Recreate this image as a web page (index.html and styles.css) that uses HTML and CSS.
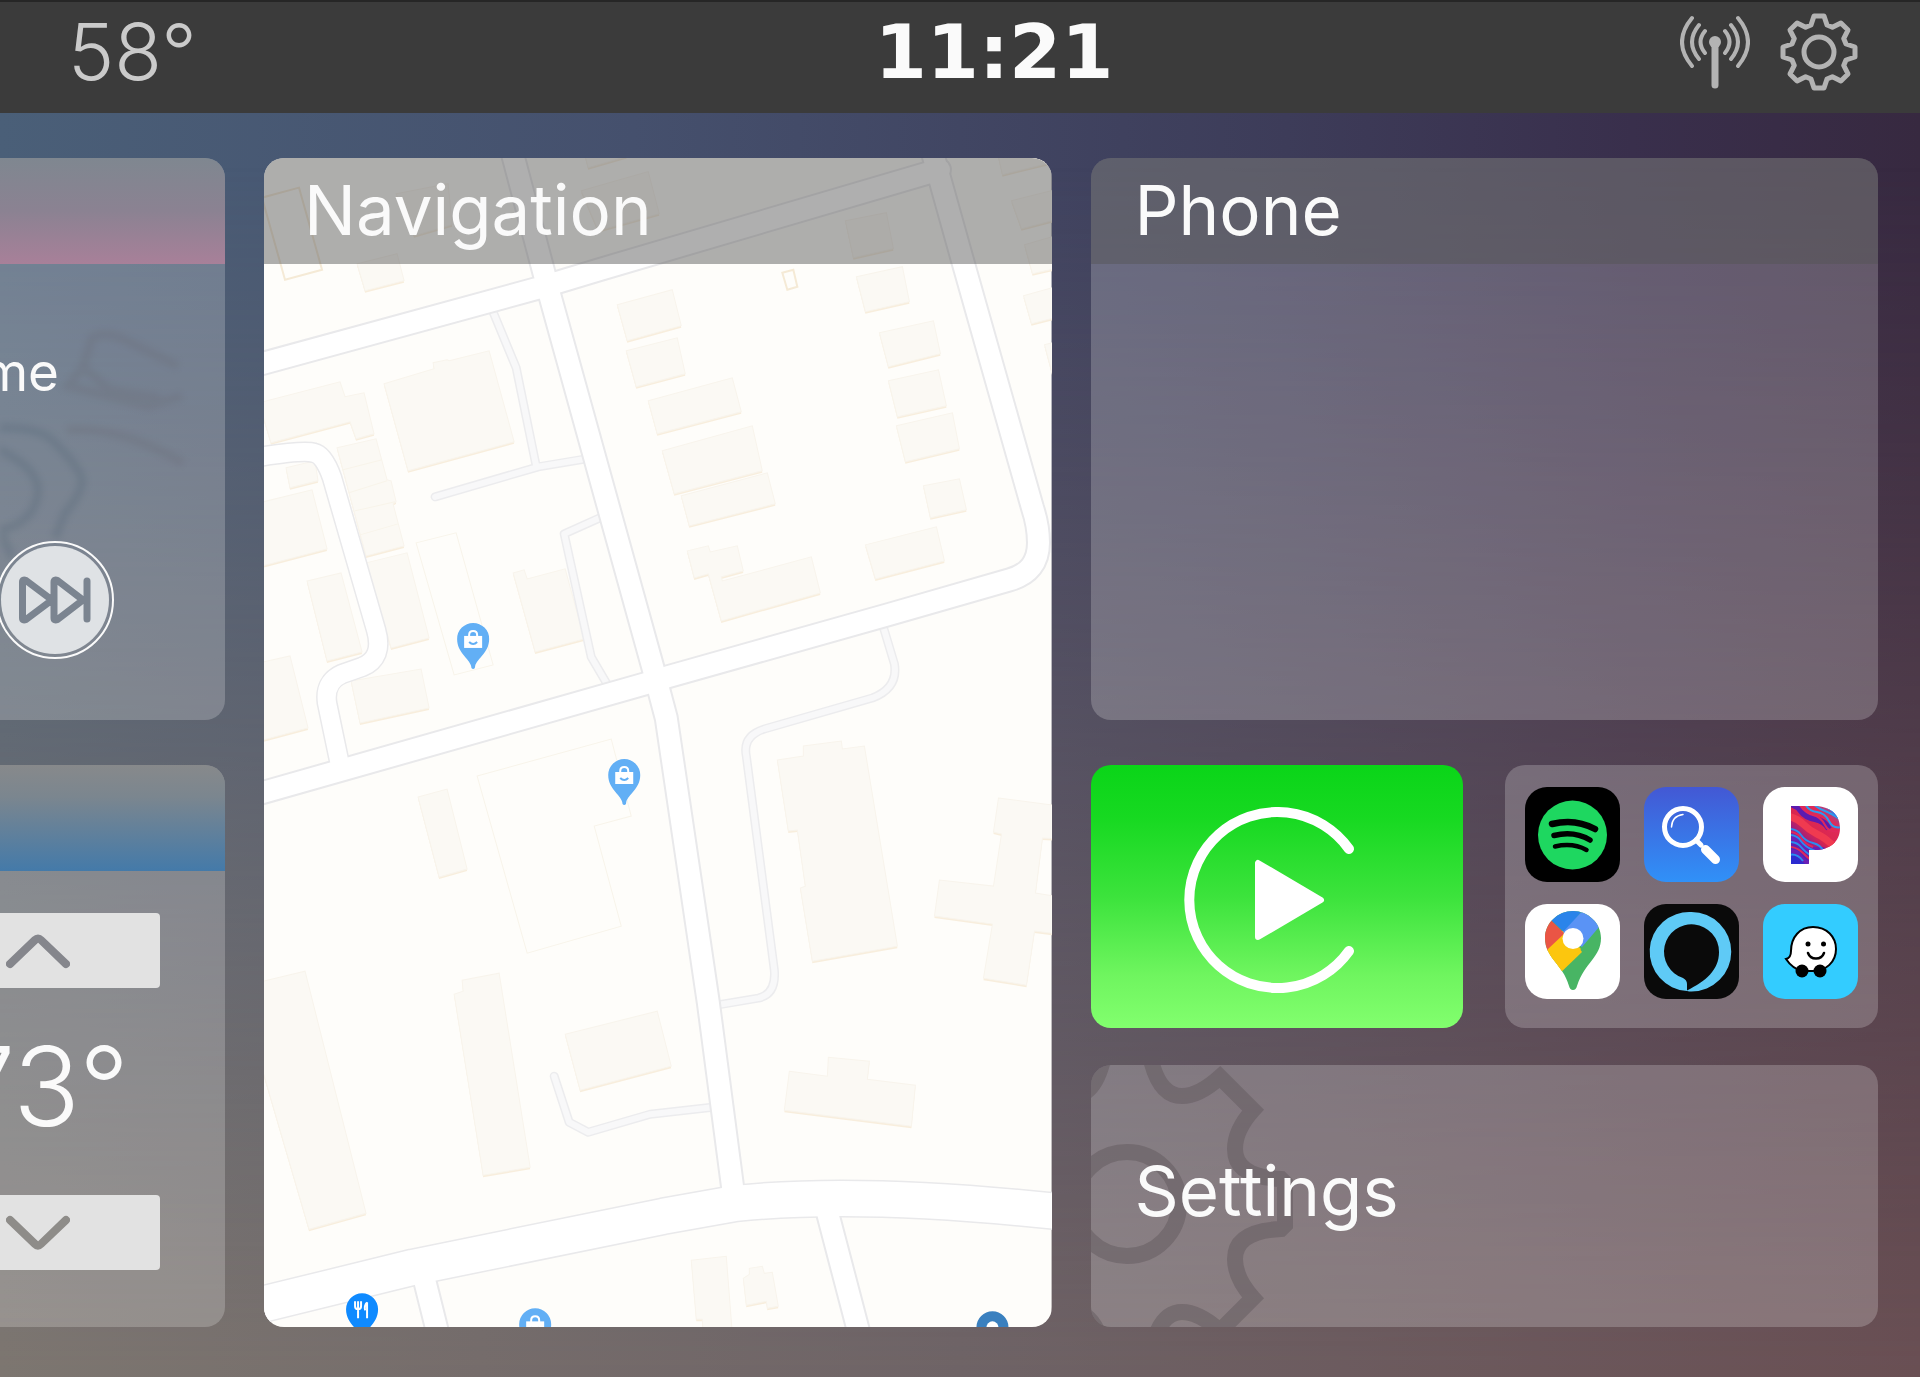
FILE: index.html
```
<!DOCTYPE html>
<html lang="en">
<head>
  <meta charset="UTF-8">
  <meta name="viewport" content="width=device-width, initial-scale=1.0">
  <title>Car Dashboard</title>
  <link rel="stylesheet" href="styles.css">
</head>
<body>
  <header class="status-bar">
    <div class="outside-temp">58°</div>
    <time class="clock" datetime="11:21">11:21</time>
    <div class="status-icons">
      <button type="button" class="icon-button" aria-label="Signal">
        <svg width="70" height="76" viewBox="0 0 70 76" fill="none" stroke="currentColor" stroke-width="4" stroke-linecap="round">
          <path d="M12 4Q-8 28 12 52M19 11Q5 28 19 45M25 17Q16 28 25 39M58 4Q78 28 58 52M51 11Q65 28 51 45M45 17Q54 28 45 39"/>
          <circle cx="35" cy="28" r="6" fill="currentColor" stroke="none"/>
          <path d="M35 30V71" stroke-width="7"/>
        </svg>
      </button>
      <button type="button" class="icon-button" aria-label="Open settings">
        <svg width="78" height="78" viewBox="-39 -39 78 78" fill="none" stroke="currentColor" stroke-width="5" stroke-linejoin="round">
          <path d="M-8-27L-5-36H5L8-27L13.4-24.7L21.9-29L29-21.9L24.7-13.4L27-8L36-5V5L27 8L24.7 13.4L29 21.9L21.9 29L13.4 24.7L8 27L5 36H-5L-8 27L-13.4 24.7L-21.9 29L-29 21.9L-24.7 13.4L-27 8L-36 5V-5L-27-8L-24.7-13.4L-29-21.9L-21.9-29L-13.4-24.7Z"/>
          <circle r="15"/>
        </svg>
      </button>
    </div>
  </header>

  <main class="dashboard">
    <div class="column">
      <section class="card edge-card music">
        <div class="card-header music-header"></div>
        <svg class="music-art" viewBox="0 0 225 562" width="225" height="562" fill="none" stroke-width="9">
          <path stroke="#6b6d78" d="M83 209L92 180Q105 172 125 182L178 208M182 238L148 248L68 228L83 209L110 232L160 240M67 272Q120 268 183 305"/>
          <path stroke="#566878" d="M-4 270Q40 268 55 285Q80 310 82 322Q82 335 65 355L55 380M-4 290Q40 310 38 335Q34 365 0 372L12 400"/>
        </svg>
        <p class="track">me</p>
        <button type="button" class="skip" aria-label="Next track">
          <svg width="74" height="48" viewBox="0 0 74 48" fill="none" stroke="#7b8490" stroke-width="7" stroke-linecap="round" stroke-linejoin="round">
            <path d="M4.500 6Q4.500 3 8 4.500L32 22.500Q34 24 32 25.500L8 43.500Q4.500 45 4.500 42ZM36 6Q36 3 39.500 4.500L63 22.500Q65 24 63 25.500L39.500 43.500Q36 45 36 42ZM69 5V43"/>
          </svg>
        </button>
      </section>
      <section class="card edge-card climate">
        <div class="card-header climate-header"></div>
        <button type="button" class="step" aria-label="Warmer">
          <svg width="64" height="36" viewBox="0 0 64 36" fill="none" stroke="#85868c" stroke-width="8" stroke-linecap="round" stroke-linejoin="round"><path d="M4 31L29 7Q32 4 35 7L60 31"/></svg>
        </button>
        <div class="cabin-temp">73°</div>
        <button type="button" class="step" aria-label="Cooler">
          <svg width="64" height="36" viewBox="0 0 64 36" fill="none" stroke="#8e8c89" stroke-width="8" stroke-linecap="round" stroke-linejoin="round"><path d="M4 5L29 29Q32 32 35 29L60 5"/></svg>
        </button>
      </section>
    </div>

    <section class="card navigation">
      <svg class="map" viewBox="0 0 787 1169" preserveAspectRatio="xMidYMid slice">
        <defs>
          <g id="buildings">
            <path d="M93 106L133 96L140 123L101 133ZM132 36L184 26L188 67L150 78ZM317 33L384 14L395 56L334 73ZM320-5H366L362-1L324 10Z"/>
            <path d="M120 226L170 211L169 205L183 202L185 203L225 193L250 284L144 313ZM-5 245L76 224L81 239L100 235L110 276L92 281L86 264L7 285ZM22 310L51 303L54 323L26 330Z"/>
            <path d="M73 290L112 281L123 322L127 323L132 344L129 346L140 388L102 398ZM-5 345L48 332L63 391L-5 409ZM43 423L77 415L98 494L63 503ZM102 405L143 395L165 480L127 490Z"/>
            <path d="M249 415L260 412L263 421L301 411L320 481L271 494ZM87 523L157 511L165 550L96 565ZM-5 505L26 498L44 570L-5 583Z"/>
            <path d="M353 147L408 132L417 168L363 183ZM362 193L413 180L421 216L372 229ZM384 243L468 220L477 254L393 276ZM398 293L488 268L498 313L410 336ZM417 338L503 315L511 346L425 368Z"/>
            <path d="M423 393L444 388L446 394L473 388L479 413L457 419L458 423L547 399L556 435L457 463L444 416L430 420Z"/>
            <path d="M581 63L622 55L629 91L589 100ZM592 119L638 109L645 144L601 154ZM615 175L669 163L676 196L624 209ZM624 223L674 212L682 248L633 259ZM632 268L688 255L695 291L641 304ZM659 328L695 321L702 352L666 360ZM601 387L672 369L680 403L611 421Z"/>
            <path d="M733-5H795V3L738 17ZM747 43L795 31V61L757 71ZM760 87L795 77V110L768 116ZM759 138L795 128V159L767 166ZM780 187L795 183V215L788 217Z"/>
            <path d="M154 639L183 631L203 711L175 719ZM-5 824L41 813L102 1055L45 1071L-5 900ZM190 836L199 833L198 822L235 815L266 1009L219 1017ZM301 876L393 853L407 908L316 932Z"/>
            <path d="M513 602L539 598L539 588L577 583L578 591L600 588L633 788L548 803L536 730L541 728L533 672L524 673Z"/>
            <path d="M734 640L795 648V681L778 680L771 735L795 739V776L770 773L762 827L719 820L728 766L670 758L675 722L729 728L737 676L729 674Z"/>
            <path d="M525 913L563 918L564 899L605 903L603 921L651 927L647 968L520 952ZM427 1102L462 1098L468 1175H439L438 1161L432 1161ZM479 1120L485 1116V1110L498 1108L500 1115L508 1114L514 1148L503 1150L502 1143L482 1147Z"/>
          </g>
          <g id="lanes">
            <path d="M228 152L252 210L272 308M171 339L274 309L322 301"/>
            <path d="M338 359L300 376L327 499L344 528"/>
            <path d="M618 466L630 506Q634 530 608 540L500 571Q478 578 482 598L510 812Q512 836 494 840L452 847"/>
            <path d="M290 918L305 964L324 974L386 956L448 949"/>
          </g>
          <g id="roads">
            <path d="M-10 208L272 131L335 112L675 12"/>
            <path d="M668-5L699 106L768 350Q774 368 774 385Q774 414 745 422L623 457L403 519L384 525L-10 637"/>
            <path d="M248-5L280 116L286 139L389 511L402 560L444 844L469 1034"/>
            <path d="M159 1116L175 1180M562 1050L596 1180"/>
            <path class="narrow" d="M-5 299Q40 292 50 295Q60 297 68 320L112 472Q120 500 98 509L78 516Q60 524 63 545L77 612"/>
            <path class="avenue" d="M-10 1148L149 1109L399 1058L472 1045Q600 1032 800 1054"/>
          </g>
          <g id="pin">
            <path d="M0 30Q-2 30-2 27C-4 19-16 14-16 0A16 16 0 0 1 16 0C16 14 4 19 2 27Q2 30 0 30Z"/>
          </g>
          <g id="bag">
            <path d="M-9-3H9V9H-9Z" fill="#fff"/>
            <path d="M-4-2V-4Q-4-8 0-8Q4-8 4-4V-2" fill="none" stroke="#fff" stroke-width="2"/>
            <path d="M-4 3Q0 7 4 3" fill="none" stroke="#62aff5" stroke-width="2"/>
          </g>
        </defs>
        <rect width="787" height="1169" fill="#fefdfa"/>
        <use href="#buildings" y="2" class="building-edge"/>
        <use href="#buildings" class="building"/>
        <path class="outline" d="M79 312L118 302M85 335L123 323M91 353L131 344M96 377L134 366"/>
        <path class="outline" d="M152 385L192 375L229 507L190 517ZM213 618L347 581L367 658L330 668L357 768L263 795Z"/>
        <path class="outline strong" d="M-2 40L35 30L58 112L21 122ZM518 115L529 112L533 129L523 132Z"/>
        <use href="#lanes" class="lane-casing"/>
        <use href="#lanes" class="lane"/>
        <use href="#roads" class="road-casing"/>
        <g class="road"><use href="#roads"/></g>
        <g transform="translate(209 481)" fill="#62aff5"><use href="#pin"/><use href="#bag"/></g>
        <g transform="translate(360 617)" fill="#62aff5"><use href="#pin"/><use href="#bag"/></g>
        <g transform="translate(271 1166)" fill="#62aff5"><use href="#pin"/><use href="#bag"/></g>
        <g transform="translate(98 1151)" fill="#0f8aff">
          <use href="#pin"/>
          <path d="M-7-8V-3Q-7 0-4 0Q-1 0-1-3V-8M-4-8V9M5-7V9M5-7Q2-4 3 1" fill="none" stroke="#fff" stroke-width="2"/>
        </g>
        <g transform="translate(728 1169)" fill="#3a80bf"><use href="#pin"/><circle r="6" fill="#fff"/></g>
      </svg>
      <div class="card-header"><h2>Navigation</h2></div>
    </section>

    <div class="column">
      <section class="card phone">
        <div class="card-header"><h2>Phone</h2></div>
      </section>
      <div class="shortcuts">
        <div class="shortcut-row">
          <button type="button" class="card carplay" aria-label="CarPlay">
            <svg width="186" height="186" viewBox="-93 -93 186 186">
              <path d="M72-51A88 88 0 1 0 72 51" fill="none" stroke="#fff" stroke-width="10" stroke-linecap="round"/>
              <path d="M-19-37V37L44 0Z" fill="#fff" stroke="#fff" stroke-width="6" stroke-linejoin="round"/>
            </svg>
          </button>
          <div class="card apps">
            <button type="button" class="app spotify" aria-label="Spotify">
              <svg viewBox="0 0 95 95" fill="none" stroke="#000" stroke-linecap="round">
                <circle cx="47.500" cy="48" r="34.500" fill="#1ed760" stroke="none"/>
                <path d="M27 37Q50 31 70 42" stroke-width="6.500"/>
                <path d="M29 48.500Q49 43.500 65 53" stroke-width="5.500"/>
                <path d="M30 59.500Q48 55.500 61.500 63" stroke-width="4.500"/>
              </svg>
            </button>
            <button type="button" class="app search" aria-label="Search">
              <svg viewBox="0 0 95 95" fill="none" stroke="#fff" stroke-linecap="round">
                <circle cx="39" cy="40" r="18.500" stroke-width="5"/>
                <path d="M27.500 40Q28 29 39 27.500" stroke-width="1.500"/>
                <path d="M52 53L57 58" stroke-width="5"/>
                <path d="M61.500 62.500L71.500 72.500" stroke-width="9"/>
              </svg>
            </button>
            <button type="button" class="app" aria-label="Pandora">
              <svg viewBox="0 0 95 95">
                <defs>
                  <clipPath id="pandora-shape"><path d="M28 19H50C67 19 77 27 77 41C77 55 67 63 51 63H46V76Q46 77 45 77H28Z"/></clipPath>
                  <linearGradient id="pandora-fill" x1="1" y1="0" x2="0.200" y2="1">
                    <stop offset="0" stop-color="#2b7be8"/>
                    <stop offset="0.250" stop-color="#e02a58"/>
                    <stop offset="0.550" stop-color="#d8264f"/>
                    <stop offset="0.800" stop-color="#7a1a9c"/>
                    <stop offset="1" stop-color="#2b2bd0"/>
                  </linearGradient>
                </defs>
                <g clip-path="url(#pandora-shape)" fill="none" stroke-width="2">
                  <rect x="28" y="19" width="50" height="58" fill="url(#pandora-fill)"/>
                  <path stroke="#5a1bb0" stroke-width="6" d="M24 16Q34 18 38 24T52 32T66 42"/>
                  <path stroke="#f03a50" stroke-width="7" d="M24 29Q34 31 40 37T54 47T66 55T80 62"/>
                  <path stroke="#2b9cf0" d="M42 17Q46 24 54 25T66 34T78 40M50 17Q56 22 62 24T80 34M60 17Q66 22 78 28"/>
                  <path stroke="#2b7bf0" stroke-width="5" d="M66 18Q72 26 80 32"/>
                  <path stroke="#6a1fb5" stroke-width="4" d="M26 51Q34 51 38 57T50 62T66 64M26 64Q34 64 38 70T50 78"/>
                  <path stroke="#2b8cf0" d="M26 42Q34 42 38 48T50 56T60 64M26 48Q34 48 38 54T52 64M26 55Q34 55 38 60T50 70M26 68Q34 66 40 74"/>
                  <path stroke="#e0285c" d="M26 45Q34 45 38 51T50 60M26 60Q34 60 40 66T50 74M36 17Q42 26 50 28T62 38T76 44"/>
                </g>
              </svg>
            </button>
            <button type="button" class="app" aria-label="Google Maps">
              <svg viewBox="0 0 95 95">
                <clipPath id="gmaps-shape"><path d="M48 7C63 7 76 19 76 34C76 53 60 58 52 82Q51 86 48 86Q45 86 44 82C38 60 20 54 20 34C20 19 33 7 48 7Z"/></clipPath>
                <g clip-path="url(#gmaps-shape)">
                  <rect width="95" height="95" fill="#48b564"/>
                  <path d="M0 71L40 24L57 48L30 74Z" fill="#fcc60e"/>
                  <path d="M10 60L40 30L20 10L0 20V71Z" fill="#ea5545"/>
                  <path d="M27 17L40 29L62 0H10Z" fill="#2a84ea"/>
                  <path d="M61 3L38 28L57 43L80 16Z" fill="#5a93f5"/>
                  <path d="M0 71L23 45L40 29L56 45L30 74Z" fill="#fcc60e"/>
                </g>
                <circle cx="48" cy="34.500" r="10.500" fill="#fff"/>
              </svg>
            </button>
            <button type="button" class="app alexa" aria-label="Alexa">
              <svg viewBox="0 0 95 95">
                <path fill="#5fcaf6" fill-rule="evenodd" d="M47.500 8A39.500 39.500 0 0 1 47.500 87.500Q45 87.500 43 87V80Q43 76 39 74A27.500 27.500 0 1 1 75 48C75 66 62 77 43 86.500V87A39.500 39.500 0 1 1 47.500 8Z"/>
              </svg>
            </button>
            <button type="button" class="app waze" aria-label="Waze">
              <svg viewBox="0 0 95 95">
                <path d="M50 23C64 23 73 33 73 45C73 58 63 67 50 67H40C33 66 27 61 23 55Q28 54 28 47C28 33 37 23 50 23Z" fill="#fff" stroke="#000" stroke-width="2"/>
                <circle cx="39" cy="67" r="6.500"/>
                <circle cx="57" cy="67" r="6.500"/>
                <circle cx="45" cy="40" r="2.500"/>
                <circle cx="60.500" cy="40" r="2.500"/>
                <path d="M45 49Q47 54.500 53 54.500T61 49" fill="none" stroke="#000" stroke-width="2.500" stroke-linecap="round"/>
              </svg>
            </button>
          </div>
        </div>
        <button type="button" class="card settings">
          <svg class="settings-gear" width="210" height="278" viewBox="0 0 210 278" fill="none" stroke="#635a5e" stroke-width="16">
            <circle cx="36" cy="139" r="52"/>
            <path d="M56-30Q62 31 91 31Q108 31 129 12L162 45Q144 65 144 84Q144 112 190 114L194 118V160L190 164Q144 166 144 194Q144 213 162 233L129 266Q108 247 91 247Q65 247 58 300M16-30Q10 31-19 31M16 308Q10 247-19 247"/>
          </svg>
          <span>Settings</span>
        </button>
      </div>
    </div>
  </main>
</body>
</html>
```

FILE: styles.css
```
* {
  box-sizing: border-box;
}
body {
  margin: 0;
  min-height: 100vh;
  display: flex;
  flex-direction: column;
  font-family: Inter, "Noto Sans", sans-serif;
  color: #fafafa;
  background: linear-gradient(to right, #4a5f78, #45506d 33%, #3d3c59 67%, #392f4c 85%, #372940);
  position: relative;
}
/* warm tones fade in towards the bottom */
body::before {
  content: "";
  position: absolute;
  inset: 0;
  z-index: -1;
  background: linear-gradient(to right, #7d7670, #6f6466 50%, #6a5054);
  -webkit-mask-image: linear-gradient(transparent 12%, #000);
  mask-image: linear-gradient(transparent 12%, #000);
}
h2,
p {
  margin: 0;
  font-weight: 400;
}
button {
  font: inherit;
  color: inherit;
  background: none;
  border: none;
  padding: 0;
  cursor: pointer;
}
svg {
  display: block;
}

/* status bar */
.status-bar {
  display: grid;
  grid-template-columns: 1fr auto 1fr;
  align-items: center;
  height: 113px;
  padding: 0 62px 12px 68px;
  background: #3b3b3b;
  border-top: 2px solid #262626;
}
.outside-temp {
  font-weight: 300;
  font-size: 78px;
  line-height: 84px;
  color: #cacaca;
}
.clock {
  margin-left: 62px;
  font-family: "DejaVu Sans", sans-serif;
  font-weight: 700;
  font-size: 75px;
  line-height: 84px;
}
.status-icons {
  display: flex;
  justify-content: flex-end;
  gap: 30px;
  color: #b3b3b3;
}

/* layout */
.dashboard {
  flex: 1;
  display: grid;
  grid-template-columns: 225px 1fr 1fr;
  gap: 39px;
  padding: 45px 42px 50px 0;
}
.column {
  display: flex;
  flex-direction: column;
  gap: 45px;
}
.card {
  position: relative;
  overflow: hidden;
  border-radius: 20px;
  background: rgba(255, 255, 255, 0.21);
}
.card-header {
  position: relative;
  height: 106px;
  padding: 0 42px;
  background: rgba(85, 85, 84, 0.47);
}
h2,
.settings span {
  font-size: 69px;
  line-height: 104px;
}

/* cards that run off the left edge of the screen */
.edge-card {
  flex: 1;
  display: flex;
  flex-direction: column;
  align-items: flex-end;
  border-radius: 0 20px 20px 0;
}
.edge-card .card-header {
  flex: none;
  width: 100%;
}
.music-header {
  background: linear-gradient(#7f8790, #8b8292 50%, #a88099);
}
.climate-header {
  background: linear-gradient(#87898b, #7b868f 30%, #447aa9);
}
.music-art {
  position: absolute;
  top: 0;
  left: 0;
  opacity: 0.3;
  filter: blur(3px);
}
.track {
  position: relative;
  margin: 72px 166px 0 0;
  font-size: 53px;
  line-height: 72px;
}
.skip {
  position: relative;
  flex: none;
  display: flex;
  align-items: center;
  justify-content: center;
  width: 118px;
  height: 118px;
  margin: 133px 111px 0 0;
  padding: 3px;
  border: 2px solid #fafafa;
  border-radius: 50%;
  background: #dfe2e5 content-box;
}
.step {
  flex: none;
  display: flex;
  align-items: center;
  width: 200px;
  height: 75px;
  margin-right: 65px;
  padding-left: 46px;
  border-radius: 4px;
  background: #e2e2e2;
}
.climate-header + .step {
  margin-top: 42px;
}
.cabin-temp + .step {
  margin-bottom: 57px;
}
.cabin-temp {
  flex: 1;
  display: flex;
  align-items: center;
  margin-right: 96px;
  padding-bottom: 12px;
  font-weight: 300;
  font-size: 110px;
  line-height: 110px;
}

/* navigation */
.navigation .card-header {
  padding: 0 40px;
}
.map {
  position: absolute;
  top: 0;
  left: 0;
  width: 100%;
  height: 100%;
}
.building {
  fill: #fbf9f4;
  stroke: #f8f4ec;
}
.building-edge {
  fill: #f8eedd;
}
.outline {
  fill: none;
  stroke: #f8f4ea;
}
.outline.strong {
  stroke: #f5ead6;
  stroke-width: 2;
}
.lane,
.lane-casing,
.road,
.road-casing {
  fill: none;
  stroke-linejoin: round;
  stroke-linecap: round;
}
.lane-casing {
  stroke: #ececee;
  stroke-width: 9;
}
.lane {
  stroke: #f8f8f9;
  stroke-width: 6;
}
.road-casing {
  --casing: 3px;
  stroke: #e9e9eb;
  stroke-width: 25;
}
.road {
  stroke: #fff;
  stroke-width: 21;
}
.narrow {
  stroke-width: calc(18px + var(--casing, 0px));
}
.avenue {
  stroke-width: calc(35px + var(--casing, 0px));
}

/* phone and shortcuts */
.phone,
.shortcuts {
  flex: 1;
}
.shortcuts {
  display: grid;
  grid-template-rows: 1fr 1fr;
  gap: 37px;
}
.shortcut-row {
  display: grid;
  grid-template-columns: 1fr 1fr;
  gap: 42px;
}
.carplay {
  display: flex;
  align-items: center;
  justify-content: center;
  padding-top: 8px;
  background: linear-gradient(#0ad518, #17d921 20%, #3ce33c 50%, #6ff55f 80%, #82ff6e);
}
.apps {
  display: grid;
  grid-template-columns: repeat(3, 95px);
  justify-content: center;
  align-content: start;
  gap: 22px 24px;
  padding-top: 22px;
}
.app {
  height: 95px;
  overflow: hidden;
  border-radius: 22px;
  background: #fff;
}
.spotify {
  background: #000;
}
.search {
  background: linear-gradient(#4358d4, #3091f8);
}
.alexa {
  background: #0a0a0a;
}
.waze {
  background: #33ccff;
}
.phone .card-header,
.settings {
  padding: 0 44px;
}
.settings {
  padding-bottom: 10px;
  text-align: left;
}
.settings-gear {
  position: absolute;
  top: 0;
  left: 0;
  opacity: 0.5;
}
.settings span {
  position: relative;
}
```
